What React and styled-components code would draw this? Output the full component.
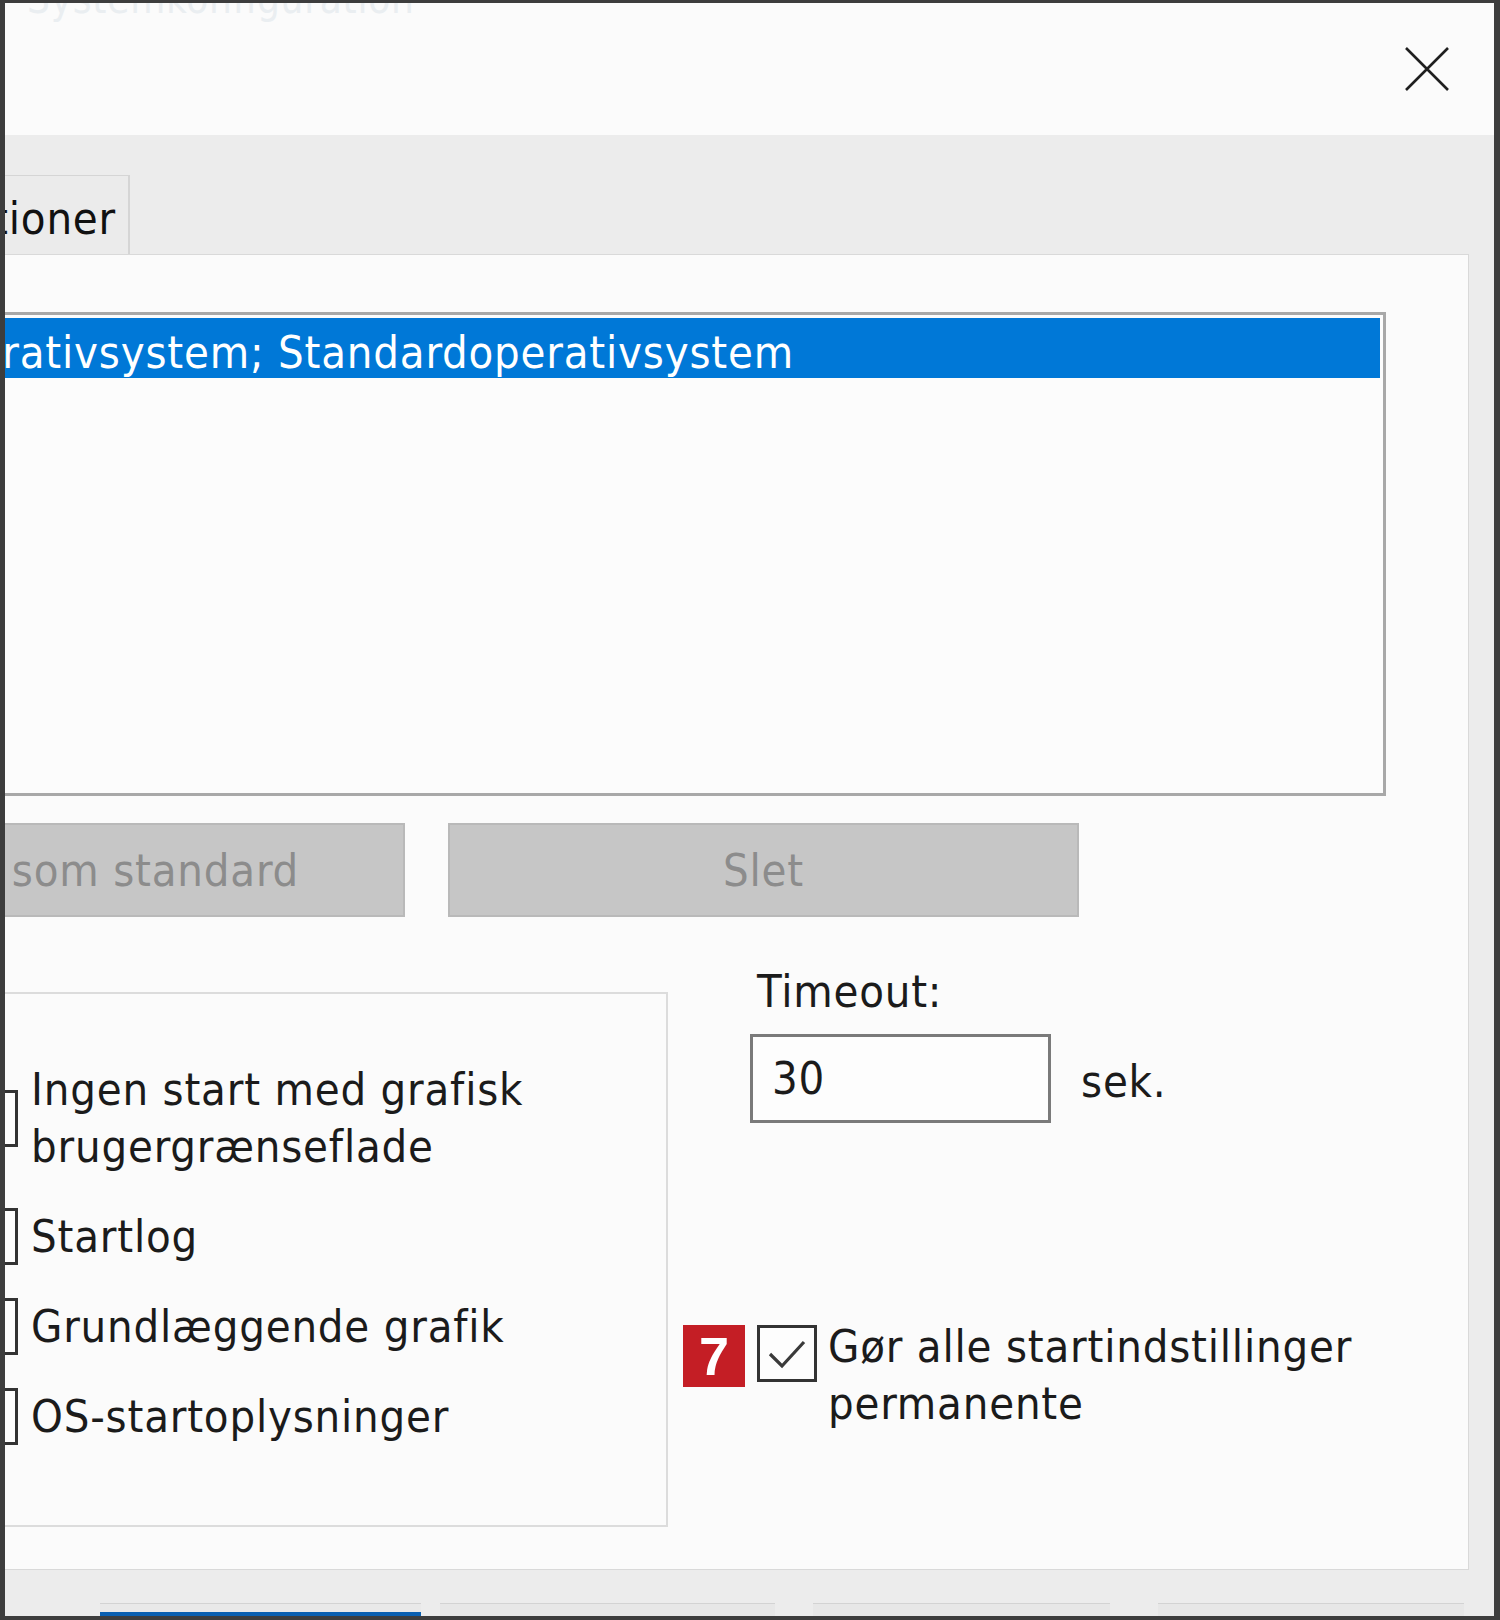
import React from "react";
import styled, { createGlobalStyle } from "styled-components";

const Global = createGlobalStyle`
  html, body { margin: 0; padding: 0; background: #ececec; }
  body {
    font-family: "DejaVu Sans Condensed", "DejaVu Sans", "Liberation Sans", sans-serif;
    font-stretch: condensed;
    letter-spacing: 0.8px;
    color: #1b1b1b;
  }
`;

const Frame = styled.div`
  width: 1500px;
  height: 1620px;
  box-sizing: border-box;
  border-style: solid;
  border-color: #3d3d3d;
  border-width: 3px 6px 4px 5px;
  overflow: hidden;
  display: flex;
  flex-direction: column;
  background: #ececec;
`;

const TitleBar = styled.div`
  height: 132px;
  flex-shrink: 0;
  background: #fbfbfb;
  display: flex;
  justify-content: space-between;
  align-items: center;
`;

const TitleText = styled.div`
  align-self: flex-start;
  margin-top: -27px;
  margin-left: 22px;
  font-size: 40px;
  line-height: 46px;
  color: #eaeef1;
  white-space: nowrap;
`;

const CloseButton = styled.div`
  width: 56px;
  height: 90px;
  margin-right: 39px;
  display: flex;
  align-items: center;
  justify-content: center;
`;

const Body = styled.div`
  flex: 1;
  display: flex;
  flex-direction: column;
  background: #ececec;
`;

const TabStrip = styled.div`
  padding-top: 40px;
  display: flex;
  flex-shrink: 0;
`;

const Tab = styled.div`
  width: 400px;
  height: 79px;
  margin-left: -275px;
  box-sizing: border-box;
  border: 1px solid #d5d5d5;
  border-right-width: 2px;
  border-bottom: none;
  background: #ebebeb;
  display: flex;
  align-items: center;
  justify-content: flex-end;
  padding: 6px 12px 0 0;
  font-size: 45px;
  line-height: 57px;
  color: #111;
  white-space: nowrap;
`;

const Panel = styled.div`
  margin: 0 25px 0 -40px;
  height: 1316px;
  flex-shrink: 0;
  box-sizing: border-box;
  border: 1px solid #d9d9d9;
  background: #fbfbfb;
  padding: 57px 82px 0 0;
  display: flex;
  flex-direction: column;
`;

const ListBox = styled.div`
  height: 484px;
  box-sizing: border-box;
  border: 3px solid #a8a8a8;
  background: #fcfcfc;
  padding: 3px;
`;

const ListRow = styled.div`
  height: 60px;
  background: ${(p) => (p.$selected ? "#0078d7" : "transparent")};
  color: ${(p) => (p.$selected ? "#ffffff" : "#1b1b1b")};
  display: flex;
  align-items: flex-start;
`;

const RowText = styled.div`
  width: 822px;
  flex-shrink: 0;
  display: flex;
  justify-content: flex-end;
  padding-top: 6px;
  font-size: 45px;
  line-height: 57px;
  white-space: nowrap;
`;

const ButtonRow = styled.div`
  margin-top: 27px;
  margin-left: -192px;
  display: flex;
  gap: 43px;
`;

const DisabledButton = styled.div`
  width: 631px;
  height: 94px;
  flex-shrink: 0;
  box-sizing: border-box;
  background: #c6c6c6;
  border: 2px solid #b9b9b9;
  color: #8c8c8c;
  font-size: 45px;
  line-height: 57px;
  display: flex;
  align-items: center;
  justify-content: center;
  white-space: nowrap;
`;

const Lower = styled.div`
  margin-top: 46px;
  display: flex;
  align-items: flex-start;
`;

const GroupBox = styled.div`
  margin-top: 29px;
  margin-left: -60px;
  width: 762px;
  height: 535px;
  flex-shrink: 0;
  box-sizing: border-box;
  border: 2px solid #dcdcdc;
  padding: 67px 0 0 53px;
  display: flex;
  flex-direction: column;
  gap: 33px;
`;

const CheckRow = styled.div`
  display: flex;
  align-items: ${(p) => (p.$top ? "flex-start" : "center")};
`;

const Box = styled.div`
  width: ${(p) => (p.$w ? p.$w : 57)}px;
  height: 57px;
  flex-shrink: 0;
  box-sizing: border-box;
  border: 3px solid #333;
  background: #fdfdfd;
  display: flex;
  align-items: center;
  justify-content: center;
`;

const Label = styled.div`
  margin-left: ${(p) => (p.$ml ? p.$ml : 13)}px;
  font-size: 45px;
  line-height: 57px;
  color: #1b1b1b;
  white-space: nowrap;
`;

const RightCol = styled.div`
  margin-left: 15px;
  display: flex;
  flex-direction: column;
`;

const TimeoutBlock = styled.div`
  margin-left: 67px;
  display: flex;
  flex-direction: column;
`;

const FieldLabel = styled.div`
  padding-left: 7px;
  font-size: 45px;
  line-height: 57px;
`;

const InputRow = styled.div`
  margin-top: 14px;
  display: flex;
  align-items: center;
  gap: 30px;
`;

const TextInput = styled.div`
  width: 301px;
  height: 89px;
  box-sizing: border-box;
  border: 3px solid #7a7a7a;
  background: #fdfdfd;
  padding-left: 19px;
  display: flex;
  align-items: center;
  font-size: 45px;
  line-height: 57px;
`;

const Unit = styled.div`
  font-size: 45px;
  line-height: 57px;
  padding-top: 6px;
`;

const PermRow = styled(CheckRow)`
  margin-top: 195px;
`;

const Badge = styled.div`
  width: 62px;
  height: 62px;
  margin-top: 7px;
  flex-shrink: 0;
  background: #c41e25;
  color: #fff;
  font-family: "Liberation Sans", "DejaVu Sans", sans-serif;
  font-stretch: normal;
  letter-spacing: 0;
  font-weight: 700;
  font-size: 54px;
  line-height: 62px;
  text-align: center;
`;

const BoxWrap = styled.div`
  margin-left: 12px;
  margin-top: 7px;
`;

const Footer = styled.div`
  margin-top: 33px;
  display: flex;
  flex: 1;
`;

const FooterButton = styled.div`
  width: ${(p) => p.$w}px;
  margin-left: ${(p) => p.$ml}px;
  flex-shrink: 0;
  box-sizing: border-box;
  border-top: 1px solid #d3d3d3;
  background: ${(p) =>
    p.$primary
      ? "linear-gradient(#e9e9e9 0 8px, #0a5fb0 8px)"
      : "#e7e7e7"};
`;

const CloseIcon = () => (
  <svg width="46" height="46" viewBox="0 0 46 46">
    <path d="M2 2 L44 44 M44 2 L2 44" stroke="#1f1f1f" strokeWidth="2.6" fill="none" />
  </svg>
);

const CheckMark = () => (
  <svg width="46" height="42" viewBox="0 0 46 42">
    <path d="M6 21 L18 33 L40 9" stroke="#3a3a3a" strokeWidth="3.2" fill="none" />
  </svg>
);

export default function App() {
  return (
    <>
      <Global />
      <Frame>
        <TitleBar>
          <TitleText>Systemkonfiguration</TitleText>
          <CloseButton>
            <CloseIcon />
          </CloseButton>
        </TitleBar>
        <Body>
          <TabStrip>
            <Tab>Startoptioner</Tab>
          </TabStrip>
          <Panel>
            <ListBox>
              <ListRow $selected>
                <RowText>
                  Windows 10 (C:\WINDOWS) : Aktuelt operativsystem; Standardoperativsystem
                </RowText>
              </ListRow>
            </ListBox>
            <ButtonRow>
              <DisabledButton>Angiv som standard</DisabledButton>
              <DisabledButton>Slet</DisabledButton>
            </ButtonRow>
            <Lower>
              <GroupBox>
                <CheckRow>
                  <Box />
                  <Label>
                    Ingen start med grafisk
                    <br />
                    brugergrænseflade
                  </Label>
                </CheckRow>
                <CheckRow>
                  <Box />
                  <Label>Startlog</Label>
                </CheckRow>
                <CheckRow>
                  <Box />
                  <Label>Grundlæggende grafik</Label>
                </CheckRow>
                <CheckRow>
                  <Box />
                  <Label>OS-startoplysninger</Label>
                </CheckRow>
              </GroupBox>
              <RightCol>
                <TimeoutBlock>
                  <FieldLabel>Timeout:</FieldLabel>
                  <InputRow>
                    <TextInput>30</TextInput>
                    <Unit>sek.</Unit>
                  </InputRow>
                </TimeoutBlock>
                <PermRow $top>
                  <Badge>7</Badge>
                  <BoxWrap>
                    <Box $w={60}>
                      <CheckMark />
                    </Box>
                  </BoxWrap>
                  <Label $ml={11}>
                    Gør alle startindstillinger
                    <br />
                    permanente
                  </Label>
                </PermRow>
              </RightCol>
            </Lower>
          </Panel>
          <Footer>
            <FooterButton $w={321} $ml={95} $primary />
            <FooterButton $w={335} $ml={19} />
            <FooterButton $w={297} $ml={38} />
            <FooterButton $w={306} $ml={48} />
          </Footer>
        </Body>
      </Frame>
    </>
  );
}
